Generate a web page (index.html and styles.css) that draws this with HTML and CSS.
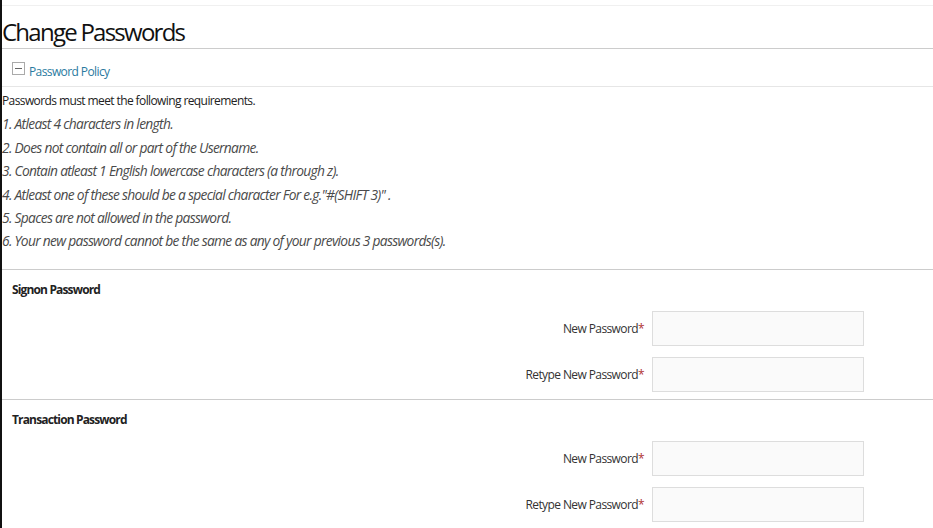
FILE: index.html
```html
<!DOCTYPE html>
<html>
<head>
<meta charset="utf-8">
<link rel="stylesheet" href="styles.css">
</head>
<body>
<div class="page">
  <div class="topbar"></div>
  <h1 class="title">Change Passwords</h1>
  <div class="policy-head">
    <span class="toggle"><span class="toggle-bar"></span></span>
    <a class="policy-link" href="#">Password Policy</a>
  </div>
  <div class="rules">
    <p class="intro">Passwords must meet the following requirements.</p>
    <p class="rule">1. Atleast 4 characters in length.</p>
    <p class="rule">2. Does not contain all or part of the Username.</p>
    <p class="rule">3. Contain atleast 1 English lowercase characters (a through z).</p>
    <p class="rule">4. Atleast one of these should be a special character For e.g."#(SHIFT 3)" .</p>
    <p class="rule">5. Spaces are not allowed in the password.</p>
    <p class="rule">6. Your new password cannot be the same as any of your previous 3 passwords(s).</p>
  </div>
  <div class="section">
    <div class="section-title">Signon Password</div>
    <div class="form">
      <label class="label">New Password<span class="req">*</span></label>
      <input class="field" type="password">
      <label class="label">Retype New Password<span class="req">*</span></label>
      <input class="field" type="password">
    </div>
  </div>
  <div class="section">
    <div class="section-title">Transaction Password</div>
    <div class="form">
      <label class="label">New Password<span class="req">*</span></label>
      <input class="field" type="password">
      <label class="label">Retype New Password<span class="req">*</span></label>
      <input class="field" type="password">
    </div>
  </div>
</div>
</body>
</html>
```
FILE: styles.css
```css
html, body {
  margin: 0;
  padding: 0;
  background: #fff;
}
body {
  font-family: "Open Sans", "Noto Sans", sans-serif;
  color: #222;
  font-size: 12px;
  letter-spacing: -0.6px;
}
.page {
  border-left: 2px solid #111;
  min-height: 528px;
  box-sizing: border-box;
}
.topbar {
  height: 5px;
  border-bottom: 1px solid #f0f0f0;
}
.title {
  margin: 0;
  height: 43px;
  box-sizing: border-box;
  padding-top: 12px;
  font-size: 24px;
  line-height: 28px;
  font-weight: 400;
  letter-spacing: -1.75px;
  color: #111;
  border-bottom: 1px solid #ccc;
}
.policy-head {
  height: 38px;
  box-sizing: border-box;
  display: flex;
  align-items: center;
  gap: 4px;
  padding-left: 10px;
  padding-top: 7px;
  border-bottom: 1px solid #e6e6e6;
}
.toggle {
  width: 11px;
  height: 11px;
  border: 1px solid #aaa;
  display: flex;
  align-items: center;
  justify-content: center;
  background: #fff;
  margin-top: -5px;
}
.toggle-bar {
  width: 7px;
  height: 1px;
  background: #666;
}
.policy-link {
  color: #2a7aa0;
  text-decoration: none;
  font-size: 12px;
}
.rules {
  padding: 2px 0 16px;
  border-bottom: 1px solid #ccc;
}
.rules p {
  margin: 0;
  line-height: 23.4px;
}
.intro {
  color: #222;
}
.rule {
  font-style: italic;
  font-size: 13.8px;
  letter-spacing: -0.7px;
  color: #4a4a4a;
}
.section {
  padding: 12px 0 7px;
  border-bottom: 1px solid #ccc;
}
.section:last-child {
  border-bottom: none;
}
.section-title {
  padding-left: 10px;
  font-weight: 700;
  line-height: 16px;
  letter-spacing: -0.85px;
  color: #222;
  margin-bottom: 13px;
}
.form {
  display: grid;
  grid-template-columns: 1fr 212px;
  column-gap: 8px;
  row-gap: 11px;
  padding-right: 69px;
  align-items: center;
}
.label {
  text-align: right;
  color: #333;
}
.req {
  color: #b03030;
}
.field {
  height: 35px;
  box-sizing: border-box;
  border: 1px solid #ddd;
  background: #fafafa;
  margin: 0;
  padding: 0 6px;
  font: inherit;
}
```
